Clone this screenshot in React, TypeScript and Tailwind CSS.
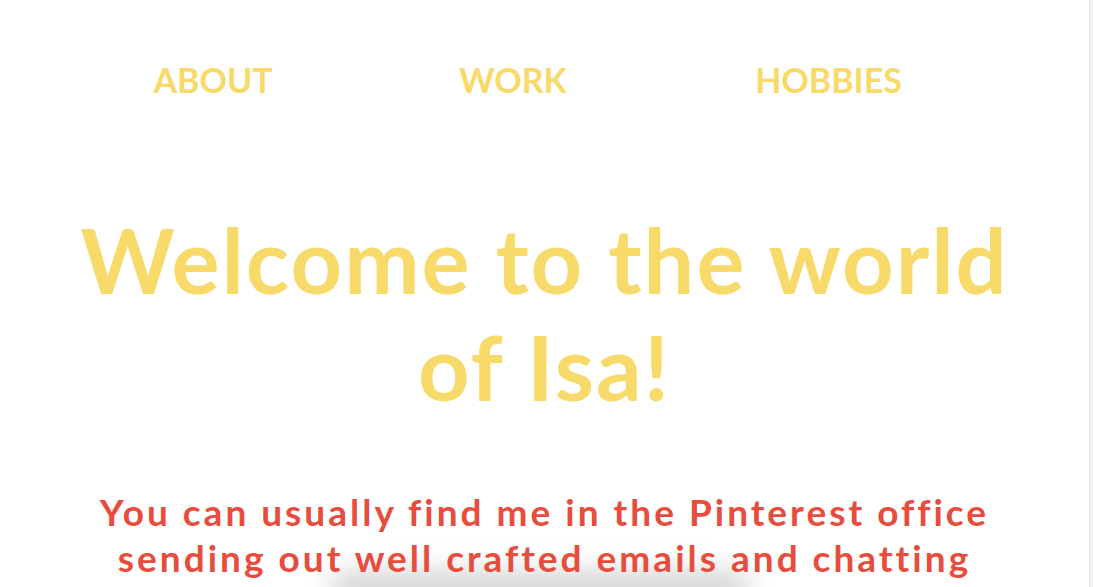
import React from "react";

export default function App() {
  const font = { fontFamily: "Lato, 'Noto Sans', sans-serif" };
  return (
    <div className="flex h-[587px] w-full overflow-hidden bg-white" style={font}>
      <div className="relative flex-1 overflow-hidden">
        <nav className="flex pl-[113px] pt-[58px] text-[34px] font-bold leading-[44px] text-[#f8da6b]">
          <div className="w-[200px] text-center">ABOUT</div>
          <div className="w-[400px] text-center">WORK</div>
          <div className="w-[231px] text-center">HOBBIES</div>
        </nav>
        <h1 className="mx-auto mt-[104px] w-[1000px] text-center text-[90px] font-bold leading-[107px] tracking-[2px] text-[#f8da6b]">
          Welcome to the world
          <br />
          of Isa!
        </h1>
        <div className="relative mt-[69px]">
          <div className="absolute left-[330px] top-[80px] h-[40px] w-[420px] rounded-full bg-[#d9d9d9] blur-[12px]" />
          <p className="relative mx-auto w-[1060px] text-center text-[37px] font-bold leading-[46px] tracking-[3px] text-[#e84c3d]">
            You can usually find me in the Pinterest office
            <br />
            sending out well crafted emails and chatting
          </p>
        </div>
      </div>
      <div className="h-full w-[4px] border-l border-[#e4e4e4] bg-[#f3f3f3]" />
    </div>
  );
}
